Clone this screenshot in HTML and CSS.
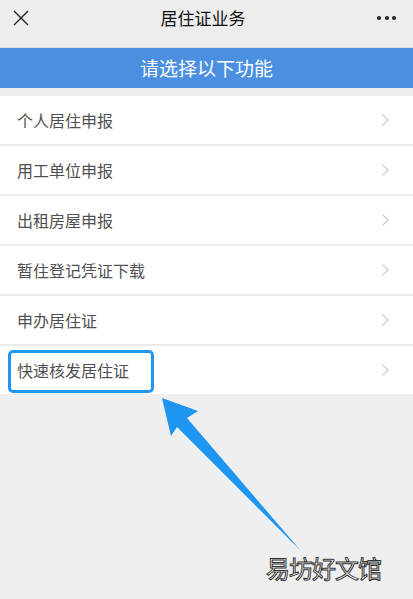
FILE: index.html
```html
<!DOCTYPE html>
<html lang="zh-CN">
<head>
    <meta charset="UTF-8">
    <meta name="viewport" content="width=device-width, initial-scale=1.0">
    <title>居住证业务</title>
    <link rel="stylesheet" href="styles.css">
</head>
<body>
<div class="page">
    <header class="topbar">
        <svg class="close-icon" width="16" height="16" viewBox="0 0 16 16">
            <path d="M1 1 L15 15 M15 1 L1 15" stroke="#222" stroke-width="1.4" fill="none"/>
        </svg>
        <div class="topbar-title">居住证业务</div>
        <div class="more-icon">
            <span></span><span></span><span></span>
        </div>
    </header>

    <div class="banner">请选择以下功能</div>

    <ul class="menu">
        <li class="menu-item">个人居住申报<i class="chevron"></i></li>
        <li class="menu-item">用工单位申报<i class="chevron"></i></li>
        <li class="menu-item">出租房屋申报<i class="chevron"></i></li>
        <li class="menu-item">暂住登记凭证下载<i class="chevron"></i></li>
        <li class="menu-item">申办居住证<i class="chevron"></i></li>
        <li class="menu-item">快速核发居住证<i class="chevron"></i>
            <div class="highlight"></div>
        </li>
    </ul>

    <!-- annotation arrow -->
    <svg class="arrow" width="413" height="599" viewBox="0 0 413 599">
        <polygon points="162,398 198,411 187,418 301,551 177,427 171,436" fill="#1f95f2"/>
    </svg>

    <div class="watermark">易坊好文馆</div>
</div>
</body>
</html>
```

FILE: styles.css
```css
body {
    margin: 0;
    background-color: #efefef;
    font-family: "Noto Sans CJK SC", "Noto Sans", sans-serif;
}
.page {
    position: relative;
    width: 413px;
    height: 599px;
    overflow: hidden;
}
.topbar {
    height: 47px;
    border-bottom: 1px solid #dcdcdc;
    background-color: #ededed;
    display: flex;
    align-items: flex-start;
    justify-content: space-between;
    padding: 0 17px 0 13px;
}
.close-icon {
    margin-top: 10px;
}
.topbar-title {
    margin-top: 6px;
    font-size: 17px;
    line-height: 24px;
    color: #111;
}
.more-icon {
    display: flex;
    gap: 3.5px;
    margin-top: 16px;
}
.more-icon span {
    width: 4px;
    height: 4px;
    border-radius: 50%;
    background-color: #222;
}
.banner {
    height: 40px;
    line-height: 40px;
    background-color: #4a8fe0;
    color: #fff;
    font-size: 19px;
    text-align: center;
}
.menu {
    list-style: none;
    margin: 8px 0 0;
    padding: 0;
    background-color: #fff;
}
.menu-item {
    position: relative;
    height: 48px;
    border-bottom: 2px solid #ececec;
    display: flex;
    align-items: center;
    justify-content: space-between;
    padding: 0 26px 0 17px;
    font-size: 16px;
    color: #505050;
}
.menu-item:last-child {
    border-bottom: none;
}
.chevron {
    width: 7px;
    height: 7px;
    border-top: 1px solid #c4c4c4;
    border-right: 1px solid #c4c4c4;
    transform: rotate(45deg);
}
.highlight {
    position: absolute;
    left: 8px;
    top: 4px;
    width: 140px;
    height: 37px;
    border: 3px solid #2196f3;
    border-radius: 5px;
}
.arrow {
    position: absolute;
    left: 0;
    top: 0;
}
.watermark {
    position: absolute;
    left: 266px;
    top: 550px;
    font-size: 24px;
    color: #fff;
    -webkit-text-stroke: 1px #333;
    letter-spacing: -1px;
}
```
